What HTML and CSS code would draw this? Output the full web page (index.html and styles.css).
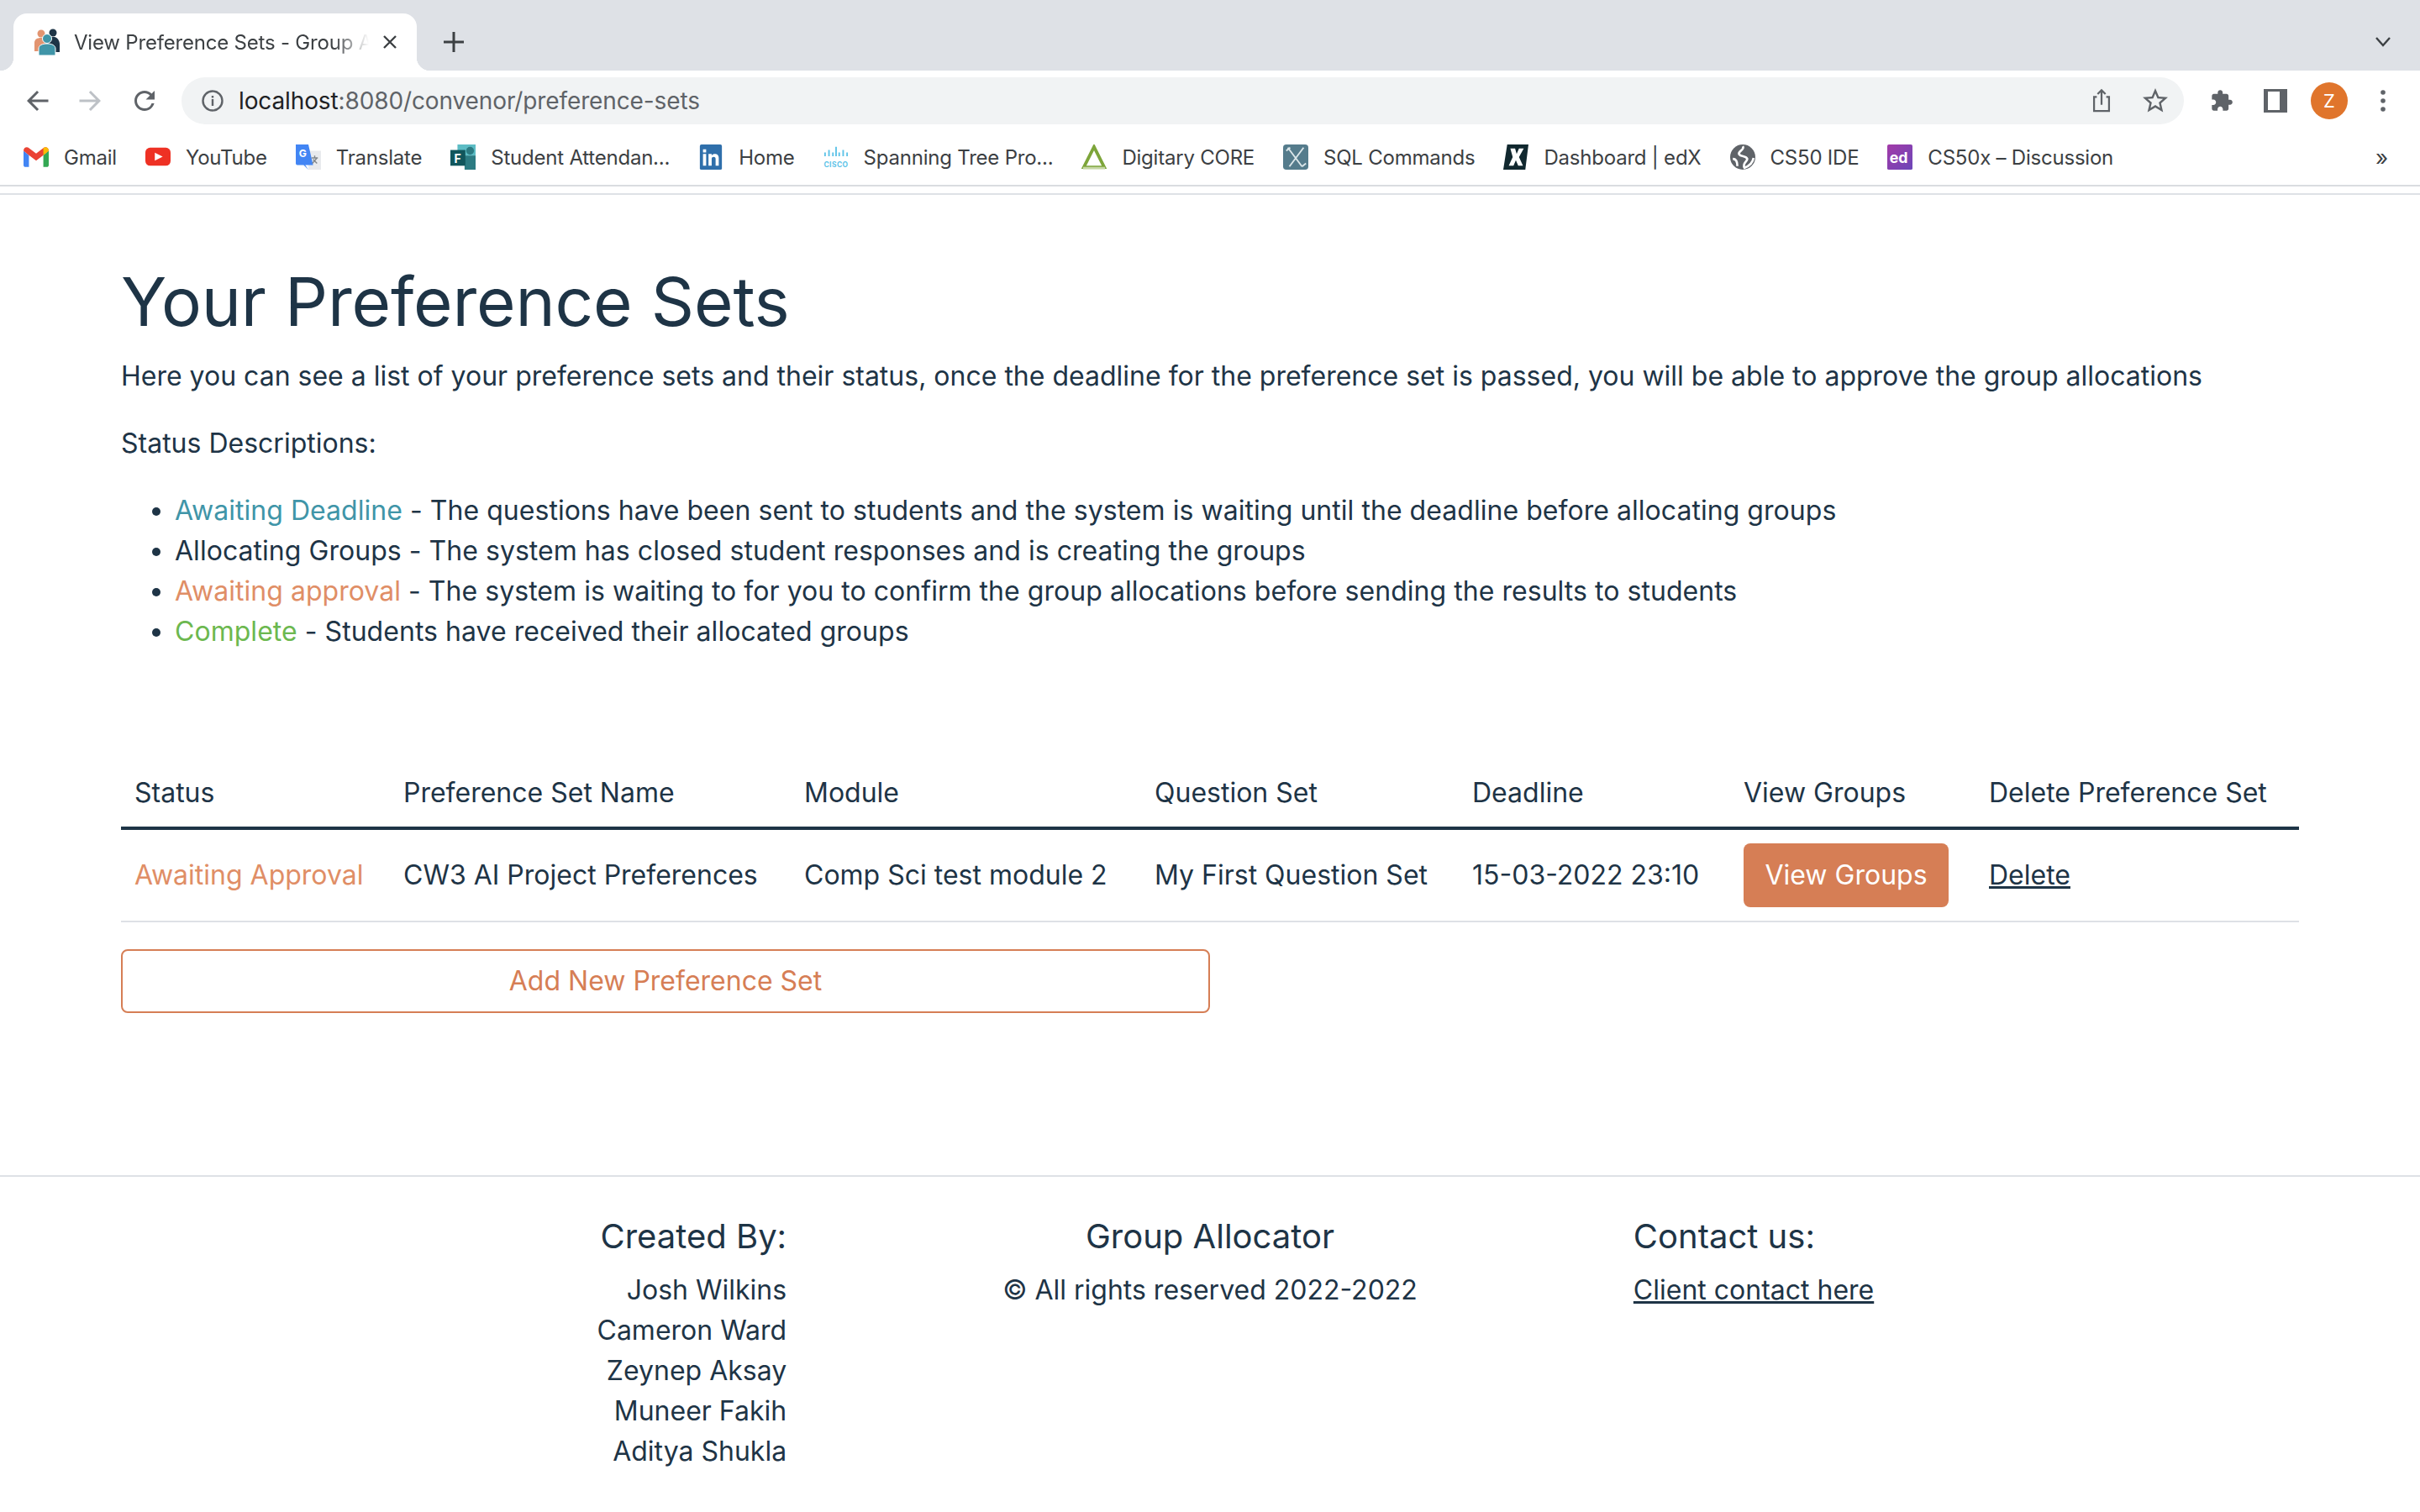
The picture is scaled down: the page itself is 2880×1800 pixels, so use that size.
FILE: index.html

```html
<!DOCTYPE html>
<html lang="en">
<head>
    <meta charset="UTF-8">
    <title>View Preference Sets - Group Allocator</title>
    <link rel="stylesheet" href="styles.css">
</head>
<body>
    <header class="browser">
        <div class="tab-strip">
            <div class="tab">
                <svg class="favicon" viewBox="0 0 32 32">
                    <circle cx="9" cy="6" r="4.5" fill="#e29470"/>
                    <path d="M1 27V17c0-4 3-6 8-6s6 2 6 6v10z" fill="#e29470"/>
                    <circle cx="23" cy="5" r="4.5" fill="#1e3446"/>
                    <path d="M17 10h8c4 1 6 5 6 9v9h-14z" fill="#1e3446"/>
                    <circle cx="16" cy="12" r="5.5" fill="#4095a8" stroke="#fff"/>
                    <path d="M6 32V24c0-4 4-6 10-6s10 2 10 6v8z" fill="#4095a8" stroke="#fff"/>
                </svg>
                <span class="tab-title">View Preference Sets - Group Allocator</span>
                <svg class="tab-close" viewBox="0 0 18 18"><path d="M2 2l14 14M16 2L2 16" stroke="#3c4043" stroke-width="2.4"/></svg>
            </div>
            <svg class="new-tab" viewBox="0 0 24 24"><path d="M12 0v24M0 12h24" stroke="#3c4043" stroke-width="3"/></svg>
            <svg class="tab-list" viewBox="0 0 20 14"><path d="M2 2l8 9 8-9" fill="none" stroke="#3c4043" stroke-width="2.4"/></svg>
        </div>

        <div class="toolbar">
            <div class="tool"><svg viewBox="0 0 24 24"><path fill="#5f6368" d="M21 11H7.83l5.59-5.59L12 4l-8 8 8 8 1.41-1.41L7.83 13H21z"/></svg></div>
            <div class="tool"><svg viewBox="0 0 24 24"><path fill="#bdc1c6" d="M3 11h13.17l-5.59-5.59L12 4l8 8-8 8-1.41-1.41L16.17 13H3z"/></svg></div>
            <div class="tool"><svg viewBox="0 0 24 24"><path fill="#5f6368" d="M17.65 6.35A7.958 7.958 0 0 0 12 4c-4.42 0-7.99 3.58-7.99 8s3.57 8 7.99 8c3.73 0 6.84-2.55 7.73-6h-2.08A5.99 5.99 0 0 1 12 18c-3.31 0-6-2.69-6-6s2.69-6 6-6c1.66 0 3.14.69 4.22 1.78L13 11h7V4l-2.35 2.35z"/></svg></div>
            <div class="omnibox">
                <svg class="info" viewBox="0 0 26 26">
                    <circle cx="13" cy="13" r="11.5" fill="none" stroke="#5f6368" stroke-width="2.4"/>
                    <path d="M11.8 11h2.4v8h-2.4zM11.8 7h2.4v2.4h-2.4z" fill="#5f6368"/>
                </svg>
                <span class="url"><span class="host">localhost</span>:8080/convenor/preference-sets</span>
                <svg class="omni-icon" viewBox="0 0 28 32">
                    <path d="M8 11H4.5v18h19V11H20M14 21V3M9 7.5L14 2.500l5 5" fill="none" stroke="#5f6368" stroke-width="2.400"/>
                </svg>
                <svg class="omni-icon" viewBox="2 2 20 20"><path fill="#5f6368" d="M22 9.24l-7.19-.62L12 2 9.19 8.63 2 9.24l5.46 4.73L5.82 21 12 17.27 18.18 21l-1.63-7.03L22 9.24zM12 15.4l-3.76 2.27 1-4.28-3.32-2.88 4.38-.38L12 6.1l1.71 4.04 4.38.38-3.32 2.88 1 4.28L12 15.4z"/></svg>
            </div>
            <div class="tool"><svg viewBox="0 0 24 24"><path fill="#5f6368" d="M20.5 11H19V7c0-1.100-.9-2-2-2h-4V3.500C13 2.120 11.880 1 10.500 1S8 2.120 8 3.500V5H4c-1.100 0-1.990.9-1.990 2v3.800H3.500c1.490 0 2.700 1.210 2.700 2.700s-1.210 2.700-2.700 2.700H2V20c0 1.100.9 2 2 2h3.800v-1.500c0-1.490 1.210-2.700 2.700-2.700 1.490 0 2.700 1.210 2.700 2.700V22H17c1.100 0 2-.9 2-2v-4h1.500c1.380 0 2.500-1.120 2.500-2.500S21.880 11 20.500 11z"/></svg></div>
            <div class="tool"><svg viewBox="0 0 28 28"><path fill="#5f6368" fill-rule="evenodd" d="M0 0h28v28H0zM5 3v22h14V3z"/></svg></div>
            <div class="tool"><span class="avatar">Z</span></div>
            <div class="tool"><svg viewBox="0 0 28 28"><circle cx="14" cy="4" r="2.800" fill="#5f6368"/><circle cx="14" cy="14" r="2.800" fill="#5f6368"/><circle cx="14" cy="24" r="2.800" fill="#5f6368"/></svg></div>
        </div>

        <div class="bookmarks">
            <a class="bookmark"><svg viewBox="0 0 28 22"><path d="M0 4v16c0 1 1 2 2 2h4V9z" fill="#4285f4"/><path d="M28 4v16c0 1-1 2-2 2h-4V9z" fill="#34a853"/><path d="M0 4c0-4 4-5 6-3l8 6 8-6c2-2 6-1 6 3l-6 5-8 6-8-6z" fill="#ea4335"/><path d="M22 1c2-2 6-1 6 3l-6 5z" fill="#fbbc04"/></svg>Gmail</a>
            <a class="bookmark"><svg viewBox="0 0 32 24"><rect width="32" height="23" rx="6" fill="#ee3124"/><path d="M12 6.500l10 5-10 5z" fill="#fff"/></svg>YouTube</a>
            <a class="bookmark"><svg viewBox="0 0 32 32"><path d="M16 8h16v24H16z" fill="#e8eaed"/><path d="M0 0h16l6 26H10l6 6-4-6H2a2 2 0 0 1-2-2z" fill="#4285f4"/><path d="M24 14v3M20 17h8M21 24l6-7M22 19l5 5" stroke="#80868b" stroke-width="1.500"/><text x="4" y="16" class="translate-g">G</text></svg>Translate</a>
            <a class="bookmark"><svg viewBox="0 0 32 32"><rect x="9" width="23" height="14" fill="#5cbcc4"/><circle cx="25" cy="8" r="5" fill="#2c7b82"/><rect x="18" y="14" width="14" height="18" fill="#2c7b82"/><rect y="7" width="19" height="20" fill="#11565c"/><text x="9" y="23" class="forms-f">F</text></svg>Student Attendan...</a>
            <a class="bookmark"><svg viewBox="0 0 28 32"><rect width="28" height="32" rx="2" fill="#2f6fab"/><path d="M4 12h4v15H4zM4 6h4v4H4zM11 12h4v2c2-3 9-3 9 3v10h-4v-9c0-3-5-3-5 0v9h-4z" fill="#fff"/></svg>Home</a>
            <a class="bookmark"><svg viewBox="0 0 32 32"><path d="M2 10v5M7 7v8M12 10v5M16 3v12M20 10v5M25 7v8M30 10v5" stroke="#5ec3e8" stroke-width="2"/><text x="16" y="29" class="cisco-label">CISCO</text></svg>Spanning Tree Pro...</a>
            <a class="bookmark"><svg viewBox="0 0 32 32"><path d="M16 3L29 29H3z" fill="none" stroke="#7da53a" stroke-width="4"/><path d="M2 30h28" stroke="#c7d8a6" stroke-width="3"/></svg>Digitary CORE</a>
            <a class="bookmark"><svg viewBox="0 0 32 32"><rect width="32" height="32" rx="4" fill="#557c8c"/><path d="M6 4l18 24M26 4L8 28M4 8l5-4M24 28l5-4" stroke="#dce7ea" stroke-width="2" fill="none"/></svg>SQL Commands</a>
            <a class="bookmark"><svg viewBox="0 0 32 32"><path d="M5 0h27l-4 32H0z" fill="#11282f"/><path d="M9 5h6l2 7 3-7h6l-6 11 5 11h-6l-3-7-3 7H7l5-11z" fill="#fff"/></svg>Dashboard | edX</a>
            <a class="bookmark"><svg viewBox="0 0 28 28"><circle cx="14" cy="14" r="14" fill="#5f6368"/><path d="M14 2c3 4-6 5-4 9 2 3 8 1 9 5 0 3-6 5-3 10 5-2 9-5 10-11M3 16c3 0 5 3 5 8" fill="none" stroke="#fff" stroke-width="2.500"/></svg>CS50 IDE</a>
            <a class="bookmark"><svg viewBox="0 0 32 32"><defs><linearGradient id="edx" x1="0" y1="0" x2="1" y2="1"><stop offset="0" stop-color="#a33ba8"/><stop offset="1" stop-color="#6b46b8"/></linearGradient></defs><rect width="32" height="32" rx="2" fill="url(#edx)"/><text x="3" y="23" class="edx-label">ed</text></svg>CS50x – Discussion</a>
            <span class="more">»</span>
        </div>
    </header>

    <main class="container">
        <h1>Your Preference Sets</h1>
        <p>Here you can see a list of your preference sets and their status, once the deadline for the preference set is passed, you will be able to approve the group allocations</p>
        <p>Status Descriptions:</p>
        <ul class="status-list">
            <li><span class="teal">Awaiting Deadline</span> - The questions have been sent to students and the system is waiting until the deadline before allocating groups</li>
            <li>Allocating Groups - The system has closed student responses and is creating the groups</li>
            <li><span class="orange">Awaiting approval</span> - The system is waiting to for you to confirm the group allocations before sending the results to students</li>
            <li><span class="green">Complete</span> - Students have received their allocated groups</li>
        </ul>

        <table class="sets-table">
            <colgroup>
                <col class="col-status">
                <col class="col-name">
                <col class="col-module">
                <col class="col-questions">
                <col class="col-deadline">
                <col class="col-view">
                <col class="col-delete">
            </colgroup>
            <thead>
                <tr>
                    <th>Status</th>
                    <th>Preference Set Name</th>
                    <th>Module</th>
                    <th>Question Set</th>
                    <th>Deadline</th>
                    <th>View Groups</th>
                    <th>Delete Preference Set</th>
                </tr>
            </thead>
            <tbody>
                <tr>
                    <td class="orange">Awaiting Approval</td>
                    <td>CW3 AI Project Preferences</td>
                    <td>Comp Sci test module 2</td>
                    <td>My First Question Set</td>
                    <td>15-03-2022 23:10</td>
                    <td><button class="view-button">View Groups</button></td>
                    <td><a class="link" href="#">Delete</a></td>
                </tr>
            </tbody>
        </table>
        <button class="add-button">Add New Preference Set</button>
    </main>

    <footer class="footer">
        <div class="footer-col footer-left">
            <h2>Created By:</h2>
            <div>Josh Wilkins</div>
            <div>Cameron Ward</div>
            <div>Zeynep Aksay</div>
            <div>Muneer Fakih</div>
            <div>Aditya Shukla</div>
        </div>
        <div class="footer-col footer-center">
            <h2>Group Allocator</h2>
            <div>© All rights reserved 2022-2022</div>
        </div>
        <div class="footer-col">
            <h2>Contact us:</h2>
            <a class="link" href="#">Client contact here</a>
        </div>
    </footer>
</body>
</html>
```

FILE: styles.css

```css
* {
    box-sizing: border-box;
}
html, body {
    overflow: hidden;
}
body {
    margin: 0;
    background-color: #fff;
    color: #1e3446;
    font-family: Inter, "Liberation Sans", sans-serif;
    font-size: 32px;
    line-height: 48px;
}

/* browser chrome */
.browser {
    height: 232px;
    border-bottom: 2px solid #dee1e6;
    line-height: normal;
}
.tab-strip {
    display: flex;
    align-items: flex-end;
    height: 84px;
    padding-left: 16px;
    background-color: #dee1e6;
}
.tab {
    position: relative;
    display: flex;
    align-items: center;
    width: 480px;
    height: 68px;
    padding: 0 23px 0 24px;
    background-color: #fff;
    border-radius: 16px 16px 0 0;
}
.tab::before,
.tab::after {
    content: "";
    position: absolute;
    bottom: 0;
    width: 16px;
    height: 16px;
}
.tab::before {
    left: -16px;
    background: radial-gradient(circle at 0 0, #dee1e6 16px, #fff 16.5px);
}
.tab::after {
    right: -16px;
    background: radial-gradient(circle at 100% 0, #dee1e6 16px, #fff 16.5px);
}
.favicon {
    flex: none;
    width: 32px;
    height: 32px;
    margin-right: 16px;
}
.tab-title {
    flex: 1;
    overflow: hidden;
    white-space: nowrap;
    font-size: 24px;
    letter-spacing: -0.2px;
    color: #3c4043;
    -webkit-mask-image: linear-gradient(to right, #000 88%, transparent 100%);
    mask-image: linear-gradient(to right, #000 88%, transparent 100%);
}
.tab-close {
    flex: none;
    width: 18px;
    height: 18px;
    margin-left: 16px;
}
.new-tab {
    flex: none;
    width: 24px;
    height: 24px;
    margin: 0 0 22px 32px;
}
.tab-list {
    flex: none;
    width: 20px;
    height: 14px;
    margin: 0 34px 27px auto;
}

.toolbar {
    display: flex;
    align-items: center;
    height: 72px;
    padding: 0 12px;
    background-color: #fff;
}
.tool {
    display: flex;
    align-items: center;
    justify-content: center;
    flex: none;
    width: 64px;
    height: 56px;
}
.tool svg {
    width: 28px;
    height: 28px;
}
.tool:nth-child(-n+3) svg {
    width: 36px;
    height: 36px;
}
.avatar {
    display: flex;
    align-items: center;
    justify-content: center;
    width: 44px;
    height: 44px;
    border-radius: 50%;
    background-color: #e0752c;
    color: #fff;
    font-size: 22px;
}
.omnibox {
    display: flex;
    align-items: center;
    flex: 1;
    height: 56px;
    margin: 0 13px 0 12px;
    padding: 0 19px 0 24px;
    border-radius: 28px;
    background-color: #f1f3f4;
}
.info {
    flex: none;
    width: 26px;
    height: 26px;
    margin-right: 18px;
}
.url {
    flex: 1;
    font-size: 28px;
    letter-spacing: -0.12px;
    color: #5f6368;
}
.host {
    color: #202124;
}
.omni-icon {
    flex: none;
    width: 30px;
    height: 30px;
    margin-left: 34px;
}

.bookmarks {
    display: flex;
    align-items: center;
    height: 66px;
    padding: 0 0 2px 28px;
    border-bottom: 2px solid #dadce0;
    background-color: #fff;
    font-size: 24px;
    letter-spacing: -0.22px;
    color: #3c4043;
}
.bookmark {
    display: flex;
    align-items: center;
    flex: none;
    margin-right: 34px;
    white-space: nowrap;
}
.bookmark svg {
    flex: none;
    width: 30px;
    height: 30px;
    margin-right: 18px;
}
.translate-g {
    font-size: 13px;
    font-weight: 700;
    fill: #fff;
}
.forms-f {
    font-size: 15px;
    font-weight: 700;
    text-anchor: middle;
    fill: #fff;
}
.cisco-label {
    font-size: 9px;
    font-weight: 700;
    letter-spacing: 0.5px;
    text-anchor: middle;
    fill: #5ec3e8;
}
.edx-label {
    font-size: 19px;
    font-weight: 700;
    fill: #fff;
}
.more {
    margin-left: auto;
    margin-right: 38px;
    font-size: 26px;
}

/* page */
.container {
    width: 90%;
    margin: 0 auto;
    padding-top: 79px;
}
h1 {
    margin: 0 0 17px;
    font-size: 80px;
    font-weight: 400;
    line-height: 96px;
    letter-spacing: -0.2px;
}
p {
    margin: 0 0 32px;
}
.status-list {
    margin: 0 0 128px;
    padding-left: 64px;
    letter-spacing: 0.04px;
}
.teal {
    color: #4095a8;
}
.orange {
    color: #e08e66;
}
.green {
    color: #6cb84f;
}

.sets-table {
    width: 100%;
    table-layout: fixed;
    border-collapse: collapse;
    white-space: nowrap;
}
.col-status { width: 320px; }
.col-name { width: 477px; }
.col-module { width: 417px; }
.col-questions { width: 378px; }
.col-deadline { width: 323px; }
.col-view { width: 292px; }
.col-delete { width: 385px; }
.sets-table th {
    padding: 16px;
    border-bottom: 4px solid #1e3446;
    font-weight: 400;
    text-align: left;
}
.sets-table td {
    padding: 16px;
    border-bottom: 2px solid #dee1e6;
}
.view-button {
    display: block;
    width: 244px;
    height: 76px;
    padding: 0;
    border: none;
    border-radius: 8px;
    background-color: #d67e55;
    color: #fff;
    font: inherit;
}
.link {
    color: #1e3446;
    text-decoration: underline;
}
.add-button {
    display: block;
    width: 1296px;
    height: 76px;
    margin-top: 32px;
    padding: 0;
    border: 2px solid #d67e55;
    border-radius: 8px;
    background-color: #fff;
    color: #d67e55;
    font: inherit;
}

.footer {
    display: grid;
    grid-template-columns: 1fr auto 1fr;
    column-gap: 257px;
    margin-top: 193px;
    padding-top: 47px;
    border-top: 2px solid #dee1e6;
}
.footer h2 {
    margin: 0 0 16px;
    font-size: 40px;
    font-weight: 400;
    line-height: 48px;
}
.footer-left {
    text-align: right;
}
.footer-center {
    text-align: center;
}
```
